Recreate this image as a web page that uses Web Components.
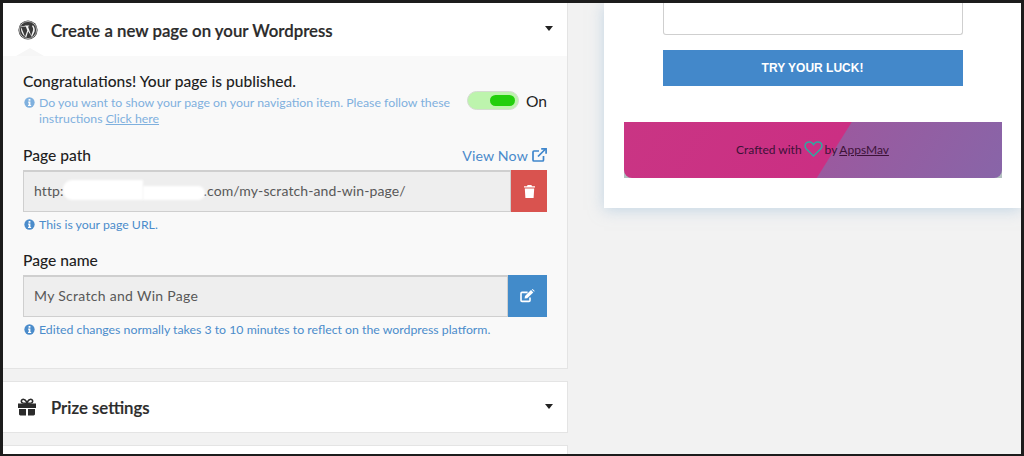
<!DOCTYPE html>
<html>
<head>
<meta charset="utf-8">
<title>Create a new page</title>
<style>
     html, body { margin: 0; height: 100%; }
     body { font-family: "Lato", "Noto Sans", sans-serif; background: #f2f2f2; overflow: hidden; }
</style>
</head>
<body>
<app-frame>
     <div slot="left">
          <accordion-card title="Create a new page on your Wordpress" open>
               <svg slot="icon" width="20" height="20" viewBox="0 0 20 20"><circle cx="10" cy="10" r="9.6" fill="#3a3a3a"/><circle cx="10" cy="10" r="8.6" fill="none" stroke="#ddd" stroke-width=".7"/><path d="M3.2 7.2 7 16.8 9.3 10.6 7.8 6.4 6.7 6.2V5.5H11.2V6.2L10 6.4 13.2 15.8 14.9 10.8C15.5 8.9 15 7.8 14.3 6.8 14 6.3 14.1 5.4 15 5.2 16.6 7.2 17.2 9.4 16.5 11.8L13.9 17 10.2 11.2 8.2 17.4C5.2 15.6 2.2 11.4 3.2 7.2Z" fill="#f4f4f4"/><path d="M3.2 6.2H7.4V6.8H3.2Z" fill="#f4f4f4"/></svg>
               <publish-panel></publish-panel>
          </accordion-card>
          <accordion-card title="Prize settings">
               <svg slot="icon" width="20" height="20" viewBox="1 0 20 20" fill="#2b2b2b"><path d="M1 6.5H19V11H1Z"/><path d="M2 12H9V18.5H3.4C2.6 18.5 2 17.9 2 17.1ZM11 12H18V17.1C18 17.9 17.4 18.5 16.6 18.5H11Z"/><path d="M10 6.2C8.2 6.2 5.6 6.4 4.8 5.4 3.8 4.2 4.6 2.2 6.2 2.2 7.8 2.2 9.2 4 10 5.2 10.8 4 12.2 2.2 13.8 2.2 15.4 2.2 16.2 4.2 15.2 5.4 14.4 6.4 11.8 6.2 10 6.2Z" fill="none" stroke="#2b2b2b" stroke-width="1.6"/></svg>
          </accordion-card>
          <accordion-card></accordion-card>
     </div>
     <preview-panel slot="right"></preview-panel>
</app-frame>

<script>
"use strict";

const infoIcon = `<svg width="11" height="11" viewBox="0 0 12 12"><circle cx="6" cy="6" r="5.6" fill="currentColor"/><rect x="5" y="2.2" width="2" height="1.9" fill="#fff"/><path d="M4.5 5H7V8.6H7.8V9.8H4.4V8.6H5.1V6.2H4.5Z" fill="#fff"/></svg>`;

class AppFrame extends HTMLElement {
     constructor(){
          super();
          this.attachShadow({ mode: 'open' }).innerHTML = `
               <style>
                    :host {
                         display: grid;
                         grid-template-columns: 565px 417px;
                         column-gap: 36px;
                         box-sizing: border-box;
                         width: 1024px;
                         height: 456px;
                         overflow: hidden;
                         border: solid #1c1c1c;
                         border-width: 3px 3px 2px 3px;
                         background: #f2f2f2;
                    }
               </style>
               <slot name="left"></slot>
               <slot name="right"></slot>
          `;
     }
}

class AccordionCard extends HTMLElement {
     constructor(){
          super();
          const title = this.getAttribute('title');
          this.removeAttribute('title');
          this.attachShadow({ mode: 'open' }).innerHTML = `
               <style>
                    :host {
                         display: block;
                         box-sizing: border-box;
                         margin-bottom: 12px;
                         background: #fff;
                         border: solid #e4e4e4;
                         border-width: 0 1px 1px 0;
                    }
                    :host(:not([open])) { border-top-width: 1px; border-left-width: 0; }
                    header {
                         display: flex;
                         align-items: center;
                         height: 50px;
                         padding: 0 14px 0 15px;
                         font-size: 16.8px;
                         font-weight: 600;
                         -webkit-text-stroke: .2px #2b2b2b;
                         color: #2b2b2b;
                    }
                    :host([open]) header { height: 53px; }
                    .icon { display: flex; width: 33px; flex: none; }
                    .title { flex: 1; white-space: nowrap; padding-top: 1px; }
                    :host([open]) .title { padding-top: 2px; }
                    .caret { width: 0; height: 0; border: solid transparent; border-width: 5px 4.5px 0; border-top-color: #222; margin-top: -2px; }
                    .body { position: relative; background: #f9f9f9; }
                    .notch {
                         position: absolute;
                         left: 13px; top: -8px;
                         width: 0; height: 0;
                         border: solid transparent;
                         border-width: 0 14px 8px;
                         border-bottom-color: #f6f6f6;
                    }
               </style>
               <header>
                    <span class="icon"><slot name="icon"></slot></span>
                    <span class="title">${title || ''}</span>
                    ${title ? '<span class="caret"></span>' : ''}
               </header>
               ${this.hasAttribute('open') ? '<div class="body"><span class="notch"></span><slot></slot></div>' : ''}
          `;
     }
}

class HelpText extends HTMLElement {
     constructor(){
          super();
          this.attachShadow({ mode: 'open' }).innerHTML = `
               <style>
                    :host {
                         display: flex;
                         gap: 5px;
                         font-size: 12.3px;
                         line-height: 16px;
                         color: #4b8ccb;
                    }
                    :host([faded]) { color: #7fb0de; }
                    svg { flex: none; margin: 2px 0 0 1px; }
                    span { margin-left: -1px; }
                    ::slotted(a) { color: inherit; }
               </style>
               ${infoIcon}
               <span><slot></slot></span>
          `;
     }
}

class FieldRow extends HTMLElement {
     constructor(){
          super();
          const width = this.getAttribute('button-width');
          const color = this.getAttribute('button-color');
          this.attachShadow({ mode: 'open' }).innerHTML = `
               <style>
                    :host {
                         display: grid;
                         grid-template-columns: 1fr ${width}px;
                         height: 42px;
                    }
                    .value {
                         display: flex;
                         align-items: center;
                         box-sizing: border-box;
                         padding: 0 0 3px 10px;
                         background: #eeeeee;
                         border: 1px solid #cfcfcf;
                         border-top-width: 2px;
                         font-size: 14px;
                         color: #585858;
                         white-space: nowrap;
                    }
                    button {
                         display: flex;
                         align-items: center;
                         justify-content: center;
                         border: 0;
                         padding: 0;
                         background: ${color};
                    }
               </style>
               <div class="value"><slot></slot></div>
               <button type="button"><slot name="icon"></slot></button>
          `;
     }
}

class PublishPanel extends HTMLElement {
     constructor(){
          super();
          this.attachShadow({ mode: 'open' }).innerHTML = `
               <style>
                    :host {
                         display: block;
                         height: 312px;
                         box-sizing: border-box;
                         padding: 15px 20px 0 20px;
                         color: #1f1f1f;
                    }
                    h3 { margin: 0; font-size: 15.6px; line-height: 20px; font-weight: 500; }
                    .status { display: grid; grid-template-columns: 1fr auto; column-gap: 8px; margin-top: 4px; }
                    .status help-text { width: 436px; }
                    .toggle { display: flex; align-items: center; gap: 7px; font-size: 15.6px; margin-top: -4px; align-self: start; }
                    .track {
                         display: flex;
                         justify-content: flex-end;
                         align-items: center;
                         box-sizing: border-box;
                         width: 52px; height: 19px;
                         padding-right: 3px;
                         border: 1px solid #d4dcd0;
                         border-radius: 10px;
                         background: #bdf4ad;
                    }
                    .knob { width: 25px; height: 11px; border-radius: 6px; background: #22cf0c; }
                    .label { display: flex; justify-content: space-between; align-items: center; height: 20px; }
                    .view { display: flex; align-items: center; gap: 4px; font-size: 14.2px; letter-spacing: .15px; color: #4a8acb; }
                    .path { margin-top: 18px; }
                    .name { margin-top: 17px; }
                    field-row { margin-top: 5px; }
                    help-text.note { margin-top: 5px; }
                    .blot {
                         display: inline-block;
                         background: #fff;
                         filter: blur(1.2px);
                    }
                    .wide { width: 80px; height: 20px; margin-left: -1px; border-radius: 9px 0 0 9px; }
                    .thin { width: 62px; height: 14px; margin: 5px -1px 0 0; border-radius: 0 7px 7px 0; }
               </style>
               <h3>Congratulations! Your page is published.</h3>
               <div class="status">
                    <help-text faded>Do you want to show your page on your navigation item. Please follow these instructions <a href="#">Click here</a></help-text>
                    <div class="toggle"><span class="track"><span class="knob"></span></span>On</div>
               </div>
               <div class="label path">
                    <h3>Page path</h3>
                    <span class="view">View Now
                         <svg width="15" height="14" viewBox="0 0 15 14" fill="none" stroke="#3f86cc" stroke-width="1.7"><path d="M11.5 8V12C11.5 12.6 11.1 13 10.5 13H2C1.4 13 1 12.6 1 12V4C1 3.4 1.4 3 2 3H7"/><path d="M6 8.5 13.5 1"/><path d="M9.2 .9H14.1V5.8" /></svg>
                    </span>
               </div>
               <field-row button-width="36" button-color="#d9534f" style="letter-spacing: .1px">
                    http:<span class="blot wide"></span><span class="blot thin"></span>.com/my-scratch-and-win-page/
                    <svg slot="icon" width="11" height="13" viewBox="0 0 11 13" fill="#fff"><path d="M3.6 0H7.4L8 1.2H11V2.6H0V1.2H3ZM.8 3.4H10.2L9.6 13H1.4Z"/></svg>
               </field-row>
               <help-text class="note">This is your page URL.</help-text>
               <div class="label name"><h3>Page name</h3></div>
               <field-row button-width="39" button-color="#428bca" style="letter-spacing: .3px">
                    My Scratch and Win Page
                    <svg slot="icon" width="15" height="14" viewBox="0 0 15 14"><path d="M10 8.4V11.4C10 12 9.6 12.4 9 12.4H2C1.4 12.4 1 12 1 11.4V4.4C1 3.8 1.4 3.4 2 3.4H7.6" fill="none" stroke="#fff" stroke-width="1.6"/><path d="M4.6 9.6 5 7.1 11 1.1 13.3 3.4 7.2 9.3Z" fill="#fff"/><path d="M11.8 .4 12.6 0 14.6 2 14.2 2.7Z" fill="#fff"/></svg>
               </field-row>
               <help-text class="note">Edited changes normally takes 3 to 10 minutes to reflect on the wordpress platform.</help-text>
          `;
     }
}

class PreviewPanel extends HTMLElement {
     constructor(){
          super();
          this.attachShadow({ mode: 'open' }).innerHTML = `
               <style>
                    :host {
                         display: flex;
                         flex-direction: column;
                         align-items: center;
                         box-sizing: border-box;
                         height: 205px;
                         background: #fff;
                         box-shadow: 0 2px 14px rgba(150, 185, 215, .5);
                    }
                    .input {
                         box-sizing: border-box;
                         width: 300px; height: 32px;
                         background: #fff;
                         border: 1px solid #cfcfcf;
                         border-top: 0;
                         border-radius: 0 0 3px 3px;
                    }
                    .try {
                         display: flex;
                         align-items: center;
                         justify-content: center;
                         width: 300px; height: 36px;
                         margin-top: 15px;
                         background: #4388ca;
                         font: 700 12px "Liberation Sans", sans-serif;
                         color: #fff;
                    }
                    .footer { width: 378px; height: 56px; margin-top: 36px; background: #b3c0c0; }
                    .crafted {
                         display: flex;
                         align-items: center;
                         justify-content: center;
                         gap: 2px;
                         box-sizing: border-box;
                         height: 100%;
                         padding-bottom: 2px;
                         border-radius: 0 0 8px 8px;
                         background: linear-gradient(122deg, #c93584 0, #cb2f83 55%, #9a5a9f 55.3%, #8865a8 100%);
                         font: 12px "Lato", sans-serif;
                         color: #3d1238;
                         white-space: nowrap;
                    }
                    .crafted a { color: inherit; text-decoration: underline; }
               </style>
               <div class="input"></div>
               <div class="try">TRY YOUR LUCK!</div>
               <div class="footer">
                    <div class="crafted">
                         Crafted with
                         <svg width="19" height="16" viewBox="0 0 19 16" fill="none" stroke="#2fa8a0" stroke-width="1.5"><path d="M9.5 15 2.4 8C.3 5.800 .8 3 2.600 1.700 4.600 .3 7.800 .8 9.500 3.500 11.200 .8 14.400 .3 16.400 1.700 18.200 3 18.700 5.800 16.600 8Z"/></svg>
                         by <a href="#">AppsMav</a>
                    </div>
               </div>
          `;
     }
}

window.customElements.define('app-frame', AppFrame);
window.customElements.define('accordion-card', AccordionCard);
window.customElements.define('help-text', HelpText);
window.customElements.define('field-row', FieldRow);
window.customElements.define('publish-panel', PublishPanel);
window.customElements.define('preview-panel', PreviewPanel);
</script>
</body>
</html>
